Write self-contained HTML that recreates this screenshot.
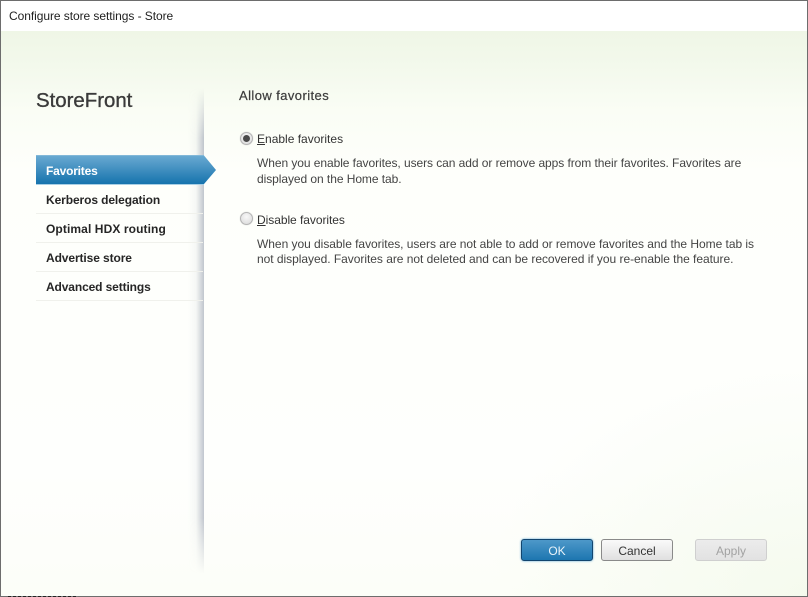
<!DOCTYPE html>
<html>
<head>
<meta charset="utf-8">
<style>
html,body{margin:0;padding:0;width:808px;height:597px;overflow:hidden;background:#fff}
body{position:relative;font-family:"Liberation Sans",sans-serif;color:#444}
.t{position:absolute;white-space:nowrap;font-size:12px;line-height:16px}
.nav{position:absolute;left:46px;font-size:12px;line-height:16px;font-weight:bold;color:#262626;white-space:nowrap}
.sep{position:absolute;left:36px;width:167px;height:1px;background:#f0f1ec}
.radio{position:absolute;left:240px;width:13px;height:13px;box-sizing:border-box;border-radius:50%;border:1px solid #b4b4b4;background:radial-gradient(circle at 50% 35%,#f8f8f8,#d8d8d8);box-shadow:0 0 1px #c8c8c8}
.btn{position:absolute;top:539px;height:20px;width:70px;border-radius:3px;text-align:center;font-size:12px;line-height:22px}
</style>
</head>
<body>
<div style="position:absolute;left:0;top:31px;width:808px;height:566px;background:linear-gradient(180deg,#eff6e6 0,#f3f9ec 35px,#fafdf5 80px,#fefffb 140px,#fefffd 440px,#fdfefa 520px,#fcfef8 566px)"></div>
<div style="position:absolute;left:0;top:31px;width:808px;height:566px;background:radial-gradient(ellipse 320px 240px at 100% 100%,rgba(238,247,228,.5),rgba(238,247,228,0) 100%)"></div>

<div style="position:absolute;left:188px;top:88px;width:16px;height:486px;background:linear-gradient(90deg,rgba(150,160,175,0) 0,rgba(150,160,175,.08) 50%,rgba(125,135,155,.48) 100%);-webkit-mask-image:linear-gradient(180deg,transparent 0,#000 50px,#000 430px,transparent 100%);mask-image:linear-gradient(180deg,transparent 0,#000 50px,#000 430px,transparent 100%)"></div>

<div style="position:absolute;left:0;top:0;width:808px;height:1px;background:#6d6d6d"></div>
<div style="position:absolute;left:0;top:0;width:1px;height:597px;background:#6d6d6d"></div>
<div style="position:absolute;left:807px;top:0;width:1px;height:597px;background:#6d6d6d"></div>
<div style="position:absolute;left:0;top:596px;width:808px;height:1px;background:#6d6d6d"></div>
<div style="position:absolute;left:8px;top:596px;width:70px;height:1px;background:repeating-linear-gradient(90deg,#222 0 3px,#777 3px 5px)"></div>

<div class="t" style="left:9px;top:8px;color:#222;letter-spacing:-.06px">Configure store settings - Store</div>
<div class="t" style="left:36px;top:89px;font-size:20.4px;line-height:24px;color:#3a3a3a;-webkit-text-stroke:.35px #3a3a3a">StoreFront</div>

<svg style="position:absolute;left:36px;top:155px" width="181" height="30" viewBox="0 0 181 30">
<defs><linearGradient id="g" x1="0" y1="0" x2="0" y2="1"><stop offset="0" stop-color="#6aaad2"/><stop offset="1" stop-color="#1673ad"/></linearGradient></defs>
<path d="M0 0.5H168L180 15L168 29H0Z" fill="url(#g)"/>
<path d="M0 0H168" stroke="#9cc6de" stroke-width="1"/>
<path d="M0 29.5H168" stroke="#a9cfe4" stroke-width="1"/>
</svg>
<div class="nav" style="top:163px;color:#fff;letter-spacing:-.2px">Favorites</div>
<div class="nav" style="top:192px;letter-spacing:-.1px">Kerberos delegation</div>
<div class="sep" style="top:213px"></div>
<div class="nav" style="top:221px;letter-spacing:.1px">Optimal HDX routing</div>
<div class="sep" style="top:242px"></div>
<div class="nav" style="top:250px;letter-spacing:-.1px">Advertise store</div>
<div class="sep" style="top:271px"></div>
<div class="nav" style="top:279px;letter-spacing:-.12px">Advanced settings</div>
<div class="sep" style="top:300px"></div>

<div class="t" style="left:239px;top:88px;font-size:13px;color:#3c3c3c;letter-spacing:.42px;-webkit-text-stroke:.2px #3c3c3c">Allow favorites</div>

<div class="radio" style="top:132px"></div>
<div style="position:absolute;left:243px;top:135px;width:7px;height:7px;border-radius:50%;background:#4a4a4a"></div>
<div class="t" style="left:257px;top:131px;color:#333"><u>E</u>nable favorites</div>
<div class="t" style="left:257px;top:155px;letter-spacing:-.066px">When you enable favorites, users can add or remove apps from their favorites. Favorites are</div>
<div class="t" style="left:257px;top:171px;letter-spacing:-.06px">displayed on the Home tab.</div>

<div class="radio" style="top:212px"></div>
<div class="t" style="left:257px;top:212px;color:#333;letter-spacing:-.05px"><u>D</u>isable favorites</div>
<div class="t" style="left:257px;top:236px;letter-spacing:-.035px">When you disable favorites, users are not able to add or remove favorites and the Home tab is</div>
<div class="t" style="left:257px;top:251px;letter-spacing:-.035px">not displayed. Favorites are not deleted and can be recovered if you re-enable the feature.</div>

<div class="btn" style="left:521px;border:1px solid #12456e;background:linear-gradient(180deg,#4d98c9,#1d76b0);color:#e8f3fa;box-shadow:0 0 2px #5aa6d6">OK</div>
<div class="btn" style="left:601px;border:1px solid #8a8a8a;background:linear-gradient(180deg,#fafafa,#e0e0e0);color:#333">Cancel</div>
<div class="btn" style="left:695px;border:1px solid #cfcfcf;background:linear-gradient(180deg,#ececec,#e2e2e2);color:#a2a2a2">Apply</div>
</body>
</html>
